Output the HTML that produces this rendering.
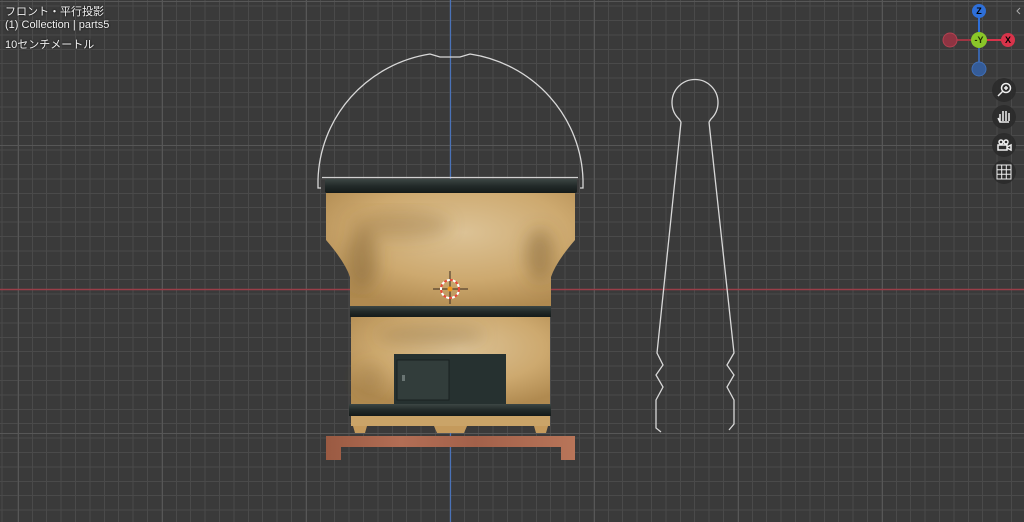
<!DOCTYPE html>
<html><head><meta charset="utf-8"><style>
html,body{margin:0;padding:0;width:1024px;height:522px;overflow:hidden}
body{background-color:#3a3a3a;background-image:repeating-linear-gradient(90deg,transparent 0,transparent 13.4px,#4a4a4a 13.4px,#4a4a4a 14.4px),repeating-linear-gradient(0deg,transparent 0,transparent 13.4px,#4a4a4a 13.4px,#4a4a4a 14.4px);background-position:4px 0,0 2px}
.t{position:absolute;left:5px;color:#f0f0f0;font:11px "Liberation Sans","Noto Sans CJK JP",sans-serif;text-shadow:0 0 2px #000}
</style></head><body>
<svg width="1024" height="522" style="position:absolute;left:0;top:0">
<defs>
<radialGradient id="tan" cx="0.55" cy="0.35" r="0.7">
<stop offset="0" stop-color="#dcc295"/><stop offset="0.6" stop-color="#cda96f"/><stop offset="1" stop-color="#b08a50"/>
</radialGradient>
<linearGradient id="dark" x1="0" y1="0" x2="0" y2="1">
<stop offset="0" stop-color="#3c4644"/><stop offset="0.5" stop-color="#222a29"/><stop offset="1" stop-color="#141a19"/>
</linearGradient>
<linearGradient id="wood" x1="0" y1="0" x2="1" y2="0">
<stop offset="0" stop-color="#9a5a42"/><stop offset="0.3" stop-color="#b26e55"/><stop offset="0.6" stop-color="#a3614a"/><stop offset="1" stop-color="#b87559"/>
</linearGradient>
<filter id="bl"><feGaussianBlur stdDeviation="8"/></filter>
</defs>
<g stroke="#575757" stroke-width="1">
<path d="M18.5 0V522M162.5 0V522M306.5 0V522M594.5 0V522M738.5 0V522M882.5 0V522"/>
<path d="M0 1.5H1024M0 145.5H1024M0 433.5H1024"/>
</g>
<path d="M0 289.5H1024" stroke="#9a3e48" stroke-width="1.5"/>
<path d="M450.5 0V522" stroke="#4a72b8" stroke-width="1.2"/>

<path d="M321 188 L318 188 L318 180 A133 131 0 0 1 430 54 L440 57 L460 57 L470 54 A133 131 0 0 1 583 180 L583 188 L580 188" fill="none" stroke="#d8d8d8" stroke-width="1.3"/>
<path d="M322 177.5H578" stroke="#d0d0d0" stroke-width="1.3"/>

<rect x="325" y="179" width="252" height="14" rx="2" fill="url(#dark)"/>
<clipPath id="c1"><path d="M326 193 H575 V240 Q556 262 551 277 V306 H350 V277 Q345 262 326 240 Z"/></clipPath>
<path d="M326 193 H575 V240 Q556 262 551 277 V306 H350 V277 Q345 262 326 240 Z" fill="url(#tan)"/>
<g clip-path="url(#c1)" filter="url(#bl)">
<ellipse cx="362" cy="260" rx="16" ry="30" fill="#7a5a2a" opacity="0.45"/>
<ellipse cx="540" cy="255" rx="14" ry="26" fill="#7a5a2a" opacity="0.45"/>
<ellipse cx="400" cy="225" rx="50" ry="14" fill="#8a6a3a" opacity="0.3"/>
</g>
<rect x="350" y="306" width="201" height="11" fill="url(#dark)"/>
<rect x="351" y="317" width="199" height="88" fill="url(#tan)"/>
<g filter="url(#bl)"><ellipse cx="430" cy="335" rx="55" ry="10" fill="#8a6a3a" opacity="0.35"/><ellipse cx="370" cy="380" rx="14" ry="16" fill="#8a6a3a" opacity="0.25"/></g>
<rect x="394" y="354" width="112" height="50" fill="#263130"/>
<rect x="397" y="360" width="52" height="40" fill="#323d3b" stroke="#1a2120" stroke-width="1"/>
<rect x="402" y="375" width="3" height="6" fill="#6a7573"/>
<rect x="349" y="404" width="202" height="12" fill="url(#dark)"/>
<rect x="351" y="416" width="199" height="10" fill="#caa468"/>
<path d="M353 426H367L365 433H355Z M434 426H467L464 433H437Z M534 426H548L546 433H536Z" fill="#c49a5c"/>
<path d="M326 436H575V460H561V447H341V460H326Z" fill="url(#wood)"/>

<g stroke="#3a2a20" stroke-width="1"><path d="M450 271V304M433 289H468"/></g>
<circle cx="450" cy="289" r="9" fill="none" stroke="#e84a3a" stroke-width="2" stroke-dasharray="3 3"/>
<circle cx="450" cy="289" r="9" fill="none" stroke="#fff" stroke-width="2" stroke-dasharray="3 3" stroke-dashoffset="3"/>
<circle cx="450" cy="289" r="2.5" fill="#f39a1e"/>

<path d="M681 122 L679 119 A23 23 0 1 1 711 119 L709 122" fill="none" stroke="#d8d8d8" stroke-width="1.3"/>
<path d="M681 122 L657 353 L663 365 L656 375 L663 387 L656 400 L656 428 L661 432" fill="none" stroke="#d8d8d8" stroke-width="1.3"/>
<path d="M709 122 L734 353 L727 365 L734 375 L727 387 L734 400 L734 424 L729 430" fill="none" stroke="#d8d8d8" stroke-width="1.3"/>

<path d="M979 11V40" stroke="#2e6fd8" stroke-width="2"/>
<path d="M979 40H1008" stroke="#d8334a" stroke-width="2"/>
<path d="M950 40H979" stroke="#9e3442" stroke-width="2"/>
<path d="M979 40V69" stroke="#3a64a8" stroke-width="2"/>
<circle cx="950" cy="40" r="7" fill="#8e3442" stroke="#b44050"/>
<circle cx="979" cy="69" r="7" fill="#355c98" stroke="#3f6fb8"/>
<circle cx="979" cy="11" r="7" fill="#2e6fd8"/>
<circle cx="1008" cy="40" r="7" fill="#d8334a"/>
<circle cx="979" cy="40" r="8" fill="#8ac629"/>
<g font-family="Liberation Sans,sans-serif" font-size="9" font-weight="bold" text-anchor="middle">
<text x="979" y="14">Z</text><text x="1008" y="43">X</text><text x="979" y="43" fill="#203000">-Y</text>
</g>
<g fill="#2b2b2b" opacity="0.9">
<circle cx="1004" cy="90" r="12"/><circle cx="1004" cy="117" r="12"/><circle cx="1004" cy="145" r="12"/><circle cx="1004" cy="172" r="12"/>
</g>
<g stroke="#eee" fill="none" stroke-width="1.5">
<circle cx="1006" cy="88" r="4.5"/><path d="M1003 91L998 96"/><path d="M1006 86V90M1004 88H1008"/>
<path d="M1000 122V114M1003 121V111M1006 121V111M1009 121V113M998 118L1000 122H1009"/>
<rect x="998" y="145" width="9" height="5"/><circle cx="1001" cy="142" r="2"/><circle cx="1006" cy="142" r="2"/><path d="M1007 147L1011 145V150L1007 148"/>
<rect x="997" y="165" width="14" height="14" stroke-width="1"/><path d="M1001.7 165V179M1006.3 165V179M997 169.7H1011M997 174.3H1011" stroke-width="1"/>
</g>
<path d="M1020 8L1017 11L1020 14" stroke="#aaa" fill="none"/>
</svg>
<div class="t" style="top:3px">フロント・平行投影</div>
<div class="t" style="top:19px">(1) Collection | parts5</div>
<div class="t" style="top:36px">10センチメートル</div>
</body></html>
